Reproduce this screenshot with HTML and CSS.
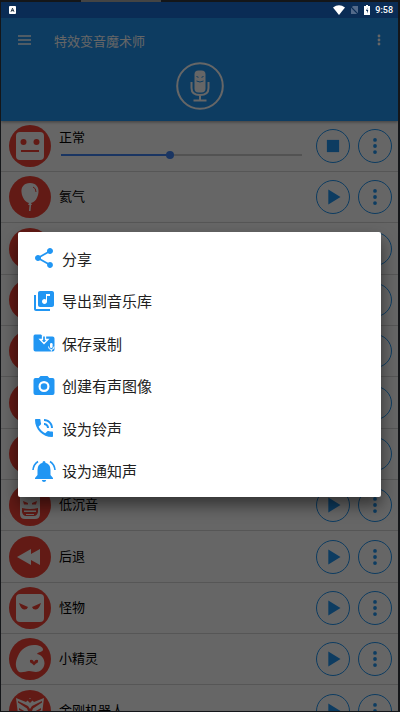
FILE: index.html
```html
<!DOCTYPE html>
<html lang="zh-CN">
<head>
<meta charset="utf-8">
<meta name="viewport" content="width=device-width, initial-scale=1">
<title>特效变音魔术师</title>
<link rel="stylesheet" href="styles.css">
</head>
<body>
<svg class="sprite" aria-hidden="true">
  <symbol id="play" viewBox="0 0 34 34"><path d="M12 9v16l13-8z"/></symbol>
  <symbol id="stop" viewBox="0 0 34 34"><path d="M10.500 10.500h13v13h-13z"/></symbol>
  <symbol id="dots" viewBox="0 0 34 34"><circle cx="17" cy="10.500" r="2"/><circle cx="17" cy="17" r="2"/><circle cx="17" cy="23.500" r="2"/></symbol>
</svg>
<div class="device">
  <div class="bezel"></div>
  <div class="status">
    <svg class="status-app" viewBox="0 0 8 9"><rect width="8" height="9" rx="1" fill="#fff"/><path d="M2.300 6.500 4 2.500l1.700 4M3 5.200h2" fill="none" stroke="#123" stroke-width="1"/></svg>
    <svg class="status-wifi" viewBox="0 0 12 10"><path d="M0 2.500Q6-1.800 12 2.500L6 10z" fill="#fff"/></svg>
    <svg class="status-sim" viewBox="0 0 8 10"><path d="M3 1h5v8H1V3z" fill="#536a8a"/><path d="M0 1l8 8" stroke="#0a2c55" stroke-width="1.200"/></svg>
    <svg class="status-battery" viewBox="0 0 6 10"><path d="M2 0h2v1h2v9H0V1h2z" fill="#fff"/><path d="M3.500 2.500 2 6h1v2.500L4.300 5H3.200z" fill="#0a2c55"/></svg>
    <time>9:58</time>
  </div>
  <main class="app">
    <header class="header">
      <div class="toolbar">
        <button class="tool" aria-label="菜单"><svg class="burger" viewBox="0 0 13 10"><path d="M0 1h13M0 5h13M0 9h13" stroke="#fff" stroke-width="1.500"/></svg></button>
        <h1>特效变音魔术师</h1>
        <button class="tool" aria-label="更多"><svg class="more" viewBox="0 0 4 12" fill="#fff"><circle cx="2" cy="2" r="1.400"/><circle cx="2" cy="6" r="1.400"/><circle cx="2" cy="10" r="1.400"/></svg></button>
      </div>
      <button class="record" aria-label="录音">
        <svg viewBox="0 0 48 48"><circle cx="24" cy="24" r="22.800" fill="none" stroke="#fff" stroke-width="2"/><rect x="18.500" y="8.500" width="11" height="22" rx="4" fill="#fff"/><path d="M15.500 20v6q0 7 8.500 7t8.500-7v-6M24 33v5M17.500 38.500h13" fill="none" stroke="#fff" stroke-width="2"/><path d="M20.500 14.500l2 .8M27.500 14.500l-2 .8M20.500 19q3.500 2 7 0" fill="none" stroke="#2196f3"/></svg>
      </button>
    </header>
    <ul class="effects">
      <li class="effect">
        <svg class="avatar" viewBox="0 0 42 42"><circle cx="21" cy="21" r="21"/><rect class="w" x="7" y="7" width="28" height="28" rx="4"/><circle cx="14.500" cy="17" r="3"/><circle cx="27.500" cy="17" r="3"/><path d="M12 25h18v2H12z"/></svg>
        <div class="info playing"><label for="seek">正常</label><input id="seek" class="seek" type="range" min="0" max="100" value="45"></div>
        <button class="round" aria-label="停止"><svg><use href="#stop"/></svg></button>
        <button class="round" aria-label="更多"><svg><use href="#dots"/></svg></button>
      </li>
      <li class="effect">
        <svg class="avatar" viewBox="0 0 42 42"><circle cx="21" cy="21" r="21"/><path class="w" d="M21 7c-6 0-9 4-8.500 9 .5 6 4 10 7.500 11l-1 2h1.500l-.5 6h1.500l.5-6H23l-1-2c4-1 7-5 7.500-11C30 11 27 7 21 7z"/><path d="M24 11q3 1 3 5" class="line"/></svg>
        <span class="info">氦气</span>
        <button class="round" aria-label="播放"><svg><use href="#play"/></svg></button>
        <button class="round" aria-label="更多"><svg><use href="#dots"/></svg></button>
      </li>
      <li class="effect">
        <svg class="avatar" viewBox="0 0 42 42"><circle cx="21" cy="21" r="21"/></svg>
        <span class="info"></span>
        <button class="round" aria-label="播放"><svg><use href="#play"/></svg></button>
        <button class="round" aria-label="更多"><svg><use href="#dots"/></svg></button>
      </li>
      <li class="effect">
        <svg class="avatar" viewBox="0 0 42 42"><circle cx="21" cy="21" r="21"/></svg>
        <span class="info"></span>
        <button class="round" aria-label="播放"><svg><use href="#play"/></svg></button>
        <button class="round" aria-label="更多"><svg><use href="#dots"/></svg></button>
      </li>
      <li class="effect">
        <svg class="avatar" viewBox="0 0 42 42"><circle cx="21" cy="21" r="21"/></svg>
        <span class="info"></span>
        <button class="round" aria-label="播放"><svg><use href="#play"/></svg></button>
        <button class="round" aria-label="更多"><svg><use href="#dots"/></svg></button>
      </li>
      <li class="effect">
        <svg class="avatar" viewBox="0 0 42 42"><circle cx="21" cy="21" r="21"/></svg>
        <span class="info"></span>
        <button class="round" aria-label="播放"><svg><use href="#play"/></svg></button>
        <button class="round" aria-label="更多"><svg><use href="#dots"/></svg></button>
      </li>
      <li class="effect">
        <svg class="avatar" viewBox="0 0 42 42"><circle cx="21" cy="21" r="21"/></svg>
        <span class="info"></span>
        <button class="round" aria-label="播放"><svg><use href="#play"/></svg></button>
        <button class="round" aria-label="更多"><svg><use href="#dots"/></svg></button>
      </li>
      <li class="effect">
        <svg class="avatar" viewBox="0 0 42 42"><circle cx="21" cy="21" r="21"/><path class="w" d="M11 8h20v22q0 5-5 5H16q-5 0-5-5z"/><path d="M14 17l5 2v1.500h-4zM28 17l-5 2v1.500h4zM13 24q8 2 16 0v4q-1 4-4 4h-8q-3 0-4-4z"/><path class="w" d="M15 26.500h12v1.500H15zM17 30h8v1h-8z"/></svg>
        <span class="info">低沉音</span>
        <button class="round" aria-label="播放"><svg><use href="#play"/></svg></button>
        <button class="round" aria-label="更多"><svg><use href="#dots"/></svg></button>
      </li>
      <li class="effect">
        <svg class="avatar" viewBox="0 0 42 42"><circle cx="21" cy="21" r="21"/><path class="w" d="M8 21l14-8v5l9-5v16l-9-5v5z"/></svg>
        <span class="info">后退</span>
        <button class="round" aria-label="播放"><svg><use href="#play"/></svg></button>
        <button class="round" aria-label="更多"><svg><use href="#dots"/></svg></button>
      </li>
      <li class="effect">
        <svg class="avatar" viewBox="0 0 42 42"><circle cx="21" cy="21" r="21"/><rect class="w" x="7" y="7" width="28" height="28" rx="4"/><path d="M10 16l9 4q-1 3-4 2.500-3-.5-5-6.500zM32 16l-9 4q1 3 4 2.500 3-.5 5-6.500z"/></svg>
        <span class="info">怪物</span>
        <button class="round" aria-label="播放"><svg><use href="#play"/></svg></button>
        <button class="round" aria-label="更多"><svg><use href="#dots"/></svg></button>
      </li>
      <li class="effect">
        <svg class="avatar" viewBox="0 0 42 42"><circle cx="21" cy="21" r="21"/><path class="w" d="M10 34C6 30 6 24 9 18 12 11 18 7 25 7c5 0 9 2 9 4.500 0 3-5 2-6 4.500 5 1 7.500 5 7.500 9.500C35 31 31 34 27 34c-3 0-4-1-7-1s-6 2-10 1z"/><path d="M21 22q3-1 4 2 1-3 4-2 .5 3-2 3.500l-2 2-2-2Q20.500 25 21 22z"/></svg>
        <span class="info">小精灵</span>
        <button class="round" aria-label="播放"><svg><use href="#play"/></svg></button>
        <button class="round" aria-label="更多"><svg><use href="#dots"/></svg></button>
      </li>
      <li class="effect">
        <svg class="avatar" viewBox="0 0 42 42"><circle cx="21" cy="21" r="21"/><path class="w" d="M7 8l10 4 4-4 4 4 10-4-2 16-4 8-8 4-8-4-4-8z"/><path d="M17 9h8l-4 4zM9 11l10 5 2 3 2-3 10-5v1.500l-9 6-2 5h-2l-2-5-9-6zM10 18l7 4v1.500l-7-3.500zM32 18l-7 4v1.500l7-3.500z"/></svg>
        <span class="info">金刚机器人</span>
        <button class="round" aria-label="播放"><svg><use href="#play"/></svg></button>
        <button class="round" aria-label="更多"><svg><use href="#dots"/></svg></button>
      </li>
    </ul>
  </main>
  <div class="scrim">
    <div class="dialog" role="dialog" aria-label="录音操作">
      <button class="action"><svg viewBox="0 0 24 24"><path d="M18 16.080c-.76 0-1.440.3-1.960.77L8.910 12.700c.05-.23.09-.46.09-.7s-.04-.47-.09-.7l7.050-4.110c.54.5 1.250.81 2.040.81 1.660 0 3-1.340 3-3s-1.340-3-3-3-3 1.340-3 3c0 .24.04.47.09.7L8.040 9.810C7.500 9.310 6.790 9 6 9c-1.660 0-3 1.340-3 3s1.340 3 3 3c.79 0 1.500-.31 2.040-.81l7.120 4.160c-.05.21-.08.43-.08.65 0 1.610 1.310 2.920 2.920 2.920s2.920-1.310 2.920-2.920-1.310-2.920-2.920-2.920z"/></svg>分享</button>
      <button class="action"><svg viewBox="0 0 24 24"><path d="M20 2H8c-1.100 0-2 .9-2 2v12c0 1.100.9 2 2 2h12c1.100 0 2-.9 2-2V4c0-1.100-.9-2-2-2zm-2 5h-3v5.500c0 1.380-1.120 2.500-2.500 2.500S10 13.880 10 12.500s1.120-2.500 2.500-2.500c.57 0 1.080.19 1.500.51V5h4v2zM4 6H2v14c0 1.100.9 2 2 2h14v-2H4V6z"/></svg>导出到音乐库</button>
      <button class="action"><svg viewBox="0 0 24 24"><path d="M3 3.500h6l2 2h9.500q2 0 2 2v11q0 2-2 2H3.500q-2 0-2-2v-13q0-2 1.500-2z"/><path d="M10.500 4.500v4h-2.500l4 4 4-4h-2.500v-4" fill="none" stroke="#fff" stroke-width="1.300"/><rect x="18" y="12" width="2.600" height="5" rx="1.300" fill="#fff"/><path d="M16.500 15.500q0 3 2.800 3t2.800-3M19.300 18.500v2" fill="none" stroke="#fff"/></svg>保存录制</button>
      <button class="action"><svg viewBox="0 0 24 24"><path d="M8.500 2 6.700 4H3.500q-2 0-2 2v13q0 2 2 2h17q2 0 2-2V6q0-2-2-2h-3.200l-1.800-2z"/><circle cx="12" cy="12.500" r="4.400" fill="none" stroke="#fff" stroke-width="2.200"/></svg>创建有声图像</button>
      <button class="action"><svg viewBox="0 0 24 24"><path d="M20 15.500c-1.250 0-2.450-.2-3.570-.57-.1-.03-.21-.05-.31-.05-.26 0-.51.1-.71.29l-2.200 2.200c-2.830-1.440-5.150-3.750-6.590-6.590l2.200-2.200c.28-.28.36-.67.25-1.020C8.700 6.450 8.500 5.250 8.500 4c0-.55-.45-1-1-1H4c-.55 0-1 .45-1 1 0 9.390 7.610 17 17 17 .55 0 1-.45 1-1v-3.500c0-.55-.45-1-1-1zM19 12h2c0-4.970-4.030-9-9-9v2c3.870 0 7 3.130 7 7zm-4 0h2c0-2.760-2.240-5-5-5v2c1.660 0 3 1.340 3 3z"/></svg>设为铃声</button>
      <button class="action"><svg viewBox="0 0 24 24"><path d="M9.800 21h4.400q-.3 2-2.200 2t-2.200-2zM12 2q1.500 0 1.500 1.800Q18.500 5 18.500 11v5l2.500 3v1H3v-1l2.500-3v-5q0-6 5-7.200Q10.500 2 12 2z"/><path d="M6 2.500Q1.500 5.500 1 11M18 2.500q4.500 3 5 8.500" fill="none" stroke="#2196f3" stroke-width="1.600"/></svg>设为通知声</button>
    </div>
  </div>
</div>
</body>
</html>
```
FILE: styles.css
```css
* { box-sizing: border-box; }

body {
  margin: 0;
  background: #141619;
  font-family: Roboto, "Noto Sans CJK SC", sans-serif;
  color: #000;
}

button {
  padding: 0;
  border: 0;
  background: none;
  font: inherit;
  color: inherit;
}

svg { display: block; flex: none; }

.sprite { position: absolute; width: 0; height: 0; }

.device {
  position: relative;
  display: flex;
  flex-direction: column;
  height: 100vh;
  padding: 0 2px 1px 1px;
  overflow: hidden;
}

.bezel {
  flex: none;
  width: 80px;
  height: 2px;
  margin-left: 80px;
  background: #444;
}

.status {
  display: flex;
  flex: none;
  align-items: center;
  height: 16px;
  padding: 0 5px 0 8px;
  background: #0a2c55;
  color: #fff;
  font-size: 9px;
  font-weight: 500;
}

.status-app { width: 7px; height: 8px; margin-right: auto; }
.status-wifi { width: 12px; height: 10px; }
.status-sim { width: 8px; height: 10px; margin-left: 5px; }
.status-battery { width: 6px; height: 10px; margin: 0 5px 0 6px; }

.app {
  flex: 1;
  min-height: 0;
  overflow: hidden;
  background: #fff;
}

.header {
  display: flex;
  flex-direction: column;
  align-items: center;
  height: 103px;
  background: #2196f3;
  box-shadow: 0 1px 3px rgba(0, 0, 0, 0.4);
  color: #fff;
}

.toolbar {
  display: flex;
  align-items: center;
  align-self: stretch;
  height: 44px;
  padding: 0 17px;
}

.toolbar h1 {
  flex: 1;
  margin: 0 0 0 23px;
  font-size: 13px;
  font-weight: 400;
}

.burger { width: 13px; height: 10px; }
.more { width: 4px; height: 12px; }
.record svg { width: 48px; height: 48px; }

.effects {
  margin: 0;
  padding: 0;
  list-style: none;
}

.effect {
  display: flex;
  align-items: center;
  height: 51px;
  padding: 0 6px 0 8px;
  border-bottom: 1px solid #d8d8d8;
}

.effect:nth-child(3n) { height: 52px; }

.avatar {
  width: 42px;
  height: 42px;
  fill: #f44336;
}

.avatar .w { fill: #fff; }
.avatar .line { fill: none; stroke: #f44336; }

.info {
  display: flex;
  flex: 1;
  flex-direction: column;
  gap: 2px;
  margin: 0 12px 0 8px;
  font-size: 13px;
  line-height: 20px;
}

.playing { padding-bottom: 4px; }

.seek {
  width: 100%;
  height: 10px;
  margin: 0;
  padding: 0 2px;
  background: none;
  appearance: none;
}

.seek::-webkit-slider-runnable-track {
  height: 2px;
  background: linear-gradient(90deg, #4285f4 45%, #ccc 45%);
}

.seek::-webkit-slider-thumb {
  width: 8px;
  height: 8px;
  margin-top: -3px;
  border-radius: 50%;
  background: #4285f4;
  appearance: none;
}

.round {
  width: 34px;
  height: 34px;
  border: 1px solid #2196f3;
  border-radius: 50%;
  fill: #2196f3;
}

.round + .round { margin-left: 8px; }
.round svg { width: 32px; height: 32px; }

.scrim {
  position: absolute;
  inset: 18px 2px 1px 1px;
  display: flex;
  align-items: center;
  padding: 0 17px;
  background: rgba(0, 0, 0, 0.6);
}

.dialog {
  flex: 1;
  padding: 5px 14px;
  border-radius: 2px;
  background: #fff;
  box-shadow: 0 8px 16px rgba(0, 0, 0, 0.5);
  color: #212121;
}

.action {
  display: flex;
  align-items: center;
  gap: 6px;
  width: 100%;
  height: 42px;
  font-size: 15px;
  text-align: left;
}

.action:nth-child(2n) { height: 43px; }

.action svg {
  width: 24px;
  height: 24px;
  fill: #2196f3;
}
```
